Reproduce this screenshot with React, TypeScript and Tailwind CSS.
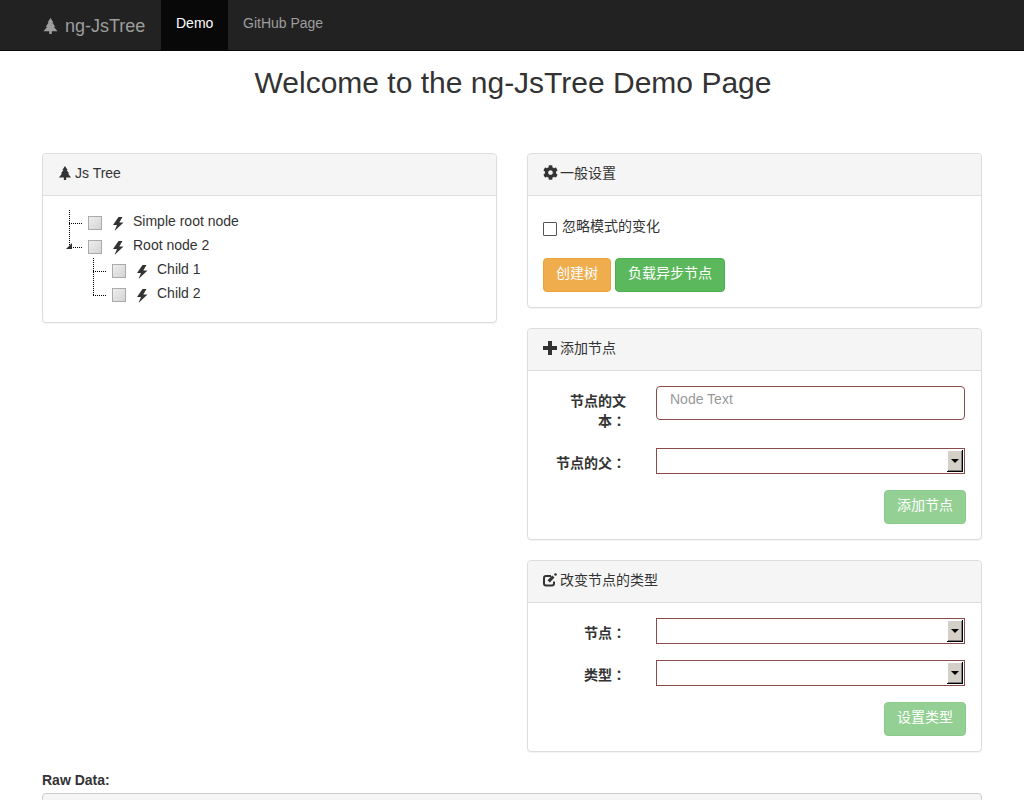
import { FaCog } from "react-icons/fa";

const Conifer = ({ className }: { className: string }) => (
  <svg viewBox="0 0 14 16" className={className} fill="currentColor">
    <path d="M7 0l3 4.500H8.800l3 4.200h-1.500L14 13.200H8.300V16H5.700v-2.800H0l3.700-4.500H2.200l3-4.200H4z" />
  </svg>
);

const Plus = () => (
  <svg viewBox="0 0 14 14" className="w-[14px] h-[14px]" fill="currentColor">
    <path d="M5 0h4v5h5v4H9v5H5V9H0V5h5z" />
  </svg>
);

const Edit = () => (
  <svg viewBox="0 0 14 14" className="w-[14px] h-[14px]" fill="none" stroke="currentColor">
    <path d="M11 8.500V10.500a2 2 0 0 1-2 2H3a2 2 0 0 1-2-2V5a2 2 0 0 1 2-2h5" strokeWidth="2" />
    <path d="M4.500 7.200l2.400 2.400 4.600-5-2.300-2.200z" fill="currentColor" stroke="none" />
    <circle cx="12.500" cy="1.500" r="1.300" fill="currentColor" stroke="none" />
  </svg>
);

const Bolt = () => (
  <svg viewBox="0 0 11 14" className="ml-[11px] mt-[6px] w-[11px] h-[14px] text-[#333] shrink-0" fill="currentColor">
    <path d="M5.500 0L0 8h4L1.500 14l9-8.500H6.300L9.500 0z" />
  </svg>
);

const Panel = ({ icon, title, children }: { icon: React.ReactNode; title: string; children: React.ReactNode }) => (
  <div className="border border-[#ddd] rounded bg-white shadow-[0_1px_1px_rgba(0,0,0,0.05)]">
    <div className="h-[42px] px-[15px] pb-[4px] bg-[#f5f5f5] border-b border-[#ddd] rounded-t flex items-center gap-[3px] text-[#333]">
      {icon}
      <span>{title}</span>
    </div>
    {children}
  </div>
);

const TreeRow = ({ label, child, last, root }: { label: string; child?: boolean; last?: boolean; root?: boolean }) => (
  <div className={`relative flex h-6 items-start ${child ? "pl-[54px]" : "pl-[30px]"}`}>
    <span className={`absolute border-l border-dotted border-black ${child ? "left-[35px]" : "left-[11px]"} ${last ? "-top-px h-[13px]" : "-top-px h-[25px]"}`} />
    <span className={`absolute top-[12px] border-t border-dotted border-black w-[13px] ${child ? "left-[35px]" : "left-[11px]"}`} />
    {root && <span className="absolute left-[8px] top-[8px] w-0 h-0 border-l-[6px] border-l-transparent border-b-[6px] border-b-[#333]" />}
    <span className="mt-[5px] w-[14px] h-[14px] border border-[#aaa] bg-gradient-to-br from-[#eee] to-[#d4d4d4] shrink-0" />
    <Bolt />
    <span className="ml-[9px] leading-[20px] text-[#333]">{label}</span>
  </div>
);

const NativeSelect = () => (
  <div className="h-[26px] w-[309px] border border-[#8a4b4b] bg-white flex justify-end p-px">
    <div className="w-[16px] h-[22px] bg-[#d4d0c8] border-r border-b border-black shadow-[inset_1px_1px_0_#fff,inset_-1px_-1px_0_#808080] flex items-center justify-center">
      <span className="w-0 h-0 border-x-[4px] border-x-transparent border-t-[4px] border-t-black" />
    </div>
  </div>
);

const Btn = ({ children, className }: { children: React.ReactNode; className: string }) => (
  <button className={`h-[34px] px-3 pb-[4px] rounded border text-white ${className}`}>{children}</button>
);

const FormRow = ({ label, children, className }: { label: React.ReactNode; children: React.ReactNode; className?: string }) => (
  <div className={`flex ${className ?? ""}`}>
    <label className="w-[83px] pt-[5px] text-right font-bold text-[#333] leading-[20px] shrink-0 font-['Liberation_Sans','Noto_Sans_CJK_TC',sans-serif]">{label}</label>
    <div className="ml-[30px] w-[309px]">{children}</div>
  </div>
);

export default function App() {
  return (
    <div className="h-[800px] overflow-hidden bg-white text-[14px] leading-[20px] text-[#333] font-['Liberation_Sans','Noto_Sans_CJK_SC',sans-serif]">
      <nav className="h-[51px] bg-[#222] border-b border-[#080808] flex pl-[27px]">
        <a className="w-[134px] flex items-center pt-[2px] gap-[7px] pl-[16px] text-[18px] text-[#9d9d9d]">
          <Conifer className="w-[15px] h-[16px] shrink-0 -mt-[1px]" />
          ng-JsTree
        </a>
        <a className="w-[67px] pl-[15px] h-[50px] pt-[13px] bg-[#080808] text-white">Demo</a>
        <a className="px-[15px] h-[50px] pt-[13px] text-[#9d9d9d]">GitHub Page</a>
      </nav>
      <div className="w-[940px] mx-auto">
        <h1 className="text-[30px] leading-[33px] text-center pl-[2px] mt-[15px] mb-[54px]">Welcome to the ng-JsTree Demo Page</h1>
        <div className="flex gap-[30px] items-start">
          <div className="w-[455px]">
            <Panel icon={<Conifer className="w-[14px] h-[14px] shrink-0" />} title="Js Tree">
              <div className="p-[15px]">
                <TreeRow label="Simple root node" />
                <TreeRow label="Root node 2" last root />
                <TreeRow label="Child 1" child />
                <TreeRow label="Child 2" child last />
              </div>
            </Panel>
          </div>
          <div className="w-[455px] flex flex-col gap-[20px]">
            <Panel icon={<FaCog className="w-[15px] h-[15px] -mr-px" />} title="一般设置">
              <div className="p-[15px]">
                <div className="flex items-center h-[20px] mt-[5px] gap-[5px]">
                  <span className="w-[14px] h-[14px] mt-[5px] border border-[#555] rounded-[1px] bg-white" />
                  <span>忽略模式的变化</span>
                </div>
                <div className="flex gap-[4px] mt-[22px]">
                  <Btn className="bg-[#f0ad4e] border-[#eea236]">创建树</Btn>
                  <Btn className="bg-[#5cb85c] border-[#4cae4c]">负载异步节点</Btn>
                </div>
              </div>
            </Panel>
            <Panel icon={<Plus />} title="添加节点">
              <div className="p-[15px]">
                <FormRow label={<>节点的文<br />本：</>}>
                  <div className="h-[34px] w-[309px] border border-[#8a4b4b] rounded px-[13px] pt-[2px] text-[#999]">Node Text</div>
                </FormRow>
                <FormRow label="节点的父：" className="mt-[17px]">
                  <NativeSelect />
                </FormRow>
                <div className="flex justify-end mt-[16px]">
                  <Btn className="bg-[#5cb85c] border-[#4cae4c] opacity-65">添加节点</Btn>
                </div>
              </div>
            </Panel>
            <Panel icon={<Edit />} title="改变节点的类型">
              <div className="p-[15px]">
                <FormRow label="节点：">
                  <NativeSelect />
                </FormRow>
                <FormRow label="类型：" className="mt-[16px]">
                  <NativeSelect />
                </FormRow>
                <div className="flex justify-end mt-[16px]">
                  <Btn className="bg-[#5cb85c] border-[#4cae4c] opacity-65">设置类型</Btn>
                </div>
              </div>
            </Panel>
          </div>
        </div>
        <div className="mt-[18px] font-bold">Raw Data:</div>
        <div className="mt-[3px] h-[100px] border border-[#ccc] rounded bg-[#f5f5f5]" />
      </div>
    </div>
  );
}
